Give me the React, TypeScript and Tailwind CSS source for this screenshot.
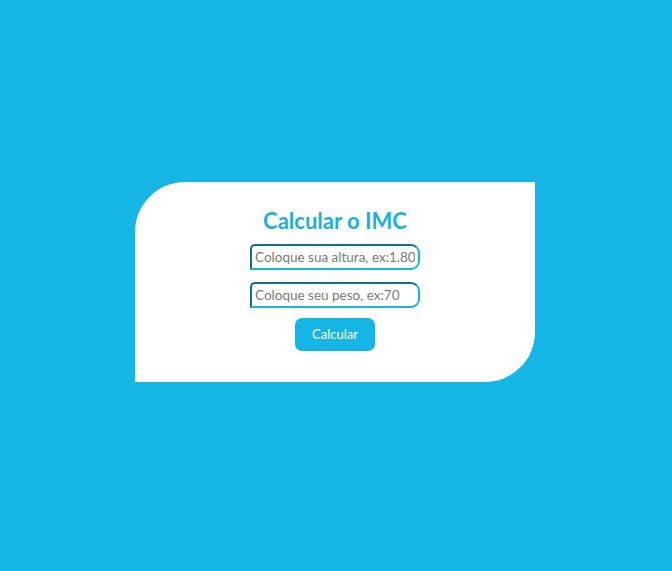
import React from "react";

export default function App() {
  return (
    <div className="w-full h-[571px] bg-[#15b5e6] flex justify-center pt-[182px] pr-[2px]" style={{ fontFamily: "Lato, 'Open Sans', sans-serif" }}>
      <div className="w-[400px] h-[200px] bg-white rounded-tl-[50px] rounded-br-[50px] flex flex-col items-center pt-[25px]">
        <h1 className="text-[22px] leading-[27px] font-bold text-[#1ab1e2]">Calcular o IMC</h1>
        <input
          className="mt-[10px] w-[170px] h-[26px] border-2 border-[#0e6f8f] border-r-[#15b5e6] border-b-[#15b5e6] rounded-tl-[5px] rounded-tr-[9px] rounded-br-[9px] rounded-bl-none px-[3px] text-[13.5px] text-[#555] placeholder:text-[#7a7a7a] outline-none"
          placeholder="Coloque sua altura, ex:1.80"
        />
        <input
          className="mt-[12px] w-[170px] h-[26px] border-2 border-[#0e6f8f] border-r-[#15b5e6] border-b-[#15b5e6] rounded-tl-[5px] rounded-tr-[9px] rounded-br-[9px] rounded-bl-none px-[3px] text-[13.5px] text-[#555] placeholder:text-[#7a7a7a] outline-none"
          placeholder="Coloque seu peso, ex:70"
        />
        <button className="mt-[10px] w-[80px] h-[33px] bg-[#15b5e6] rounded-[7px] text-white text-[13px]">
          Calcular
        </button>
      </div>
    </div>
  );
}
